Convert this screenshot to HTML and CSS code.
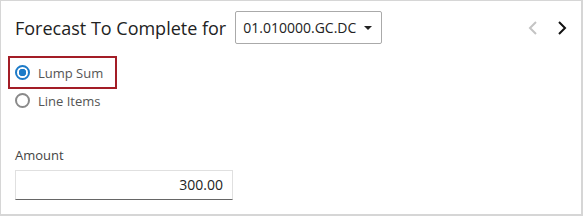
FILE: index.html
```html
<!DOCTYPE html>
<html lang="en">
<head>
    <meta charset="UTF-8">
    <title>Forecast To Complete</title>
    <link rel="stylesheet" href="styles.css">
</head>
<body>
<div class="panel">
    <div class="header">
        <h2 class="title">Forecast To Complete for</h2>
        <div class="select-box">
            <span>01.010000.GC.DC</span>
            <span class="caret"></span>
        </div>
        <div class="nav">
            <svg class="nav-btn disabled" width="12" height="16" viewBox="0 0 12 16"><path d="M9 2 L3 8 L9 14" fill="none" stroke="currentColor" stroke-width="2"/></svg>
            <svg class="nav-btn" width="12" height="16" viewBox="0 0 12 16"><path d="M3 2 L9 8 L3 14" fill="none" stroke="currentColor" stroke-width="2"/></svg>
        </div>
    </div>

    <div class="options">
        <label class="radio highlight">
            <span class="dot checked"></span>
            Lump Sum
        </label>
        <label class="radio">
            <span class="dot"></span>
            Line Items
        </label>
    </div>

    <div class="field">
        <div class="field-label">Amount</div>
        <div class="amount-input">300.00</div>
    </div>
</div>
</body>
</html>
```

FILE: styles.css
```css
body {
    margin: 0;
    font-family: "Open Sans", sans-serif;
    background: #fff;
    color: #333;
}
.panel {
    width: 580px;
    height: 213px;
    border: 1px solid #d6d6d6;
    border-width: 1px 2px 2px 1px;
}
.header {
    display: flex;
    align-items: center;
    padding: 10px 0 0 14px;
}
.title {
    margin: 0;
    font-size: 18px;
    font-weight: normal;
    color: #222;
}
.select-box {
    display: flex;
    align-items: center;
    justify-content: space-between;
    width: 131px;
    height: 31px;
    margin-left: 9px;
    padding: 0 7px;
    border: 1px solid #aaa;
    border-radius: 2px;
    font-size: 14px;
    color: #222;
}
.caret {
    width: 0;
    height: 0;
    border-left: 4px solid transparent;
    border-right: 4px solid transparent;
    border-top: 4px solid #222;
    margin-right: 2px;
}
.nav {
    margin-left: auto;
    margin-right: 13px;
    display: flex;
    gap: 17px;
}
.nav-btn {
    color: #111;
}
.nav-btn.disabled {
    color: #c4c4c4;
}
.options {
    margin-top: 12px;
    margin-left: 7px;
}
.radio {
    display: flex;
    align-items: center;
    width: 100px;
    height: 23px;
    padding-left: 5px;
    font-size: 13px;
    color: #555;
    border: 2px solid transparent;
    border-top: 0;
}
.radio.highlight {
    border: 2px solid #a31d26;
    height: 29px;
}
.dot {
    box-sizing: border-box;
    width: 15px;
    height: 15px;
    border: 2px solid #8a8a8a;
    border-radius: 50%;
    margin-right: 8px;
}
.dot.checked {
    border-color: #1d7bc8;
    background: radial-gradient(circle, #1d7bc8 3.5px, #fff 4px);
}
.field {
    margin: 32px 0 0 14px;
}
.field-label {
    font-size: 13px;
    color: #444;
    margin-bottom: 6px;
}
.amount-input {
    box-sizing: border-box;
    width: 218px;
    height: 30px;
    padding: 4px 9px 0 0;
    text-align: right;
    font-size: 14px;
    color: #222;
    border: 1px solid #e0e0e0;
    border-bottom: 1px solid #666;
}
```
